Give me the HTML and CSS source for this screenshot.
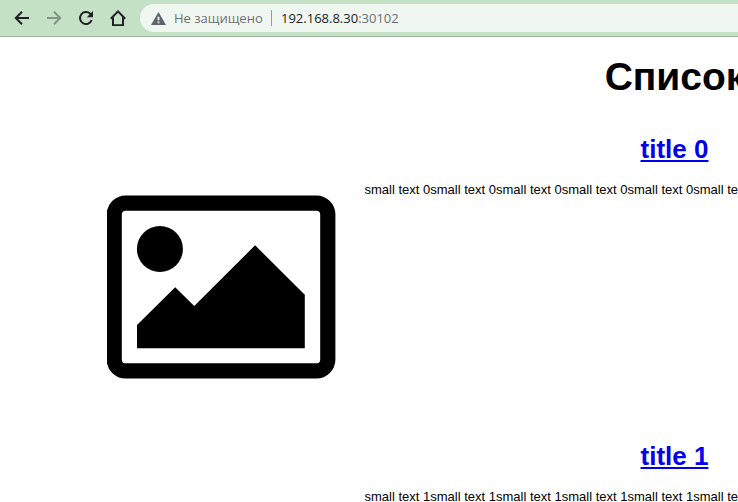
FILE: index.html
```html
<!DOCTYPE html>
<html lang="ru">
<head>
<meta charset="utf-8">
<title>Список</title>
<link rel="stylesheet" href="styles.css">
</head>
<body>
<header class="toolbar">
  <nav class="nav">
    <svg class="nav-icon" viewBox="0 0 16 16"><path d="M15 8H2M8 1.8 1.8 8 8 14.2"/></svg>
    <svg class="nav-icon disabled" viewBox="0 0 16 16"><path d="M1 8h13M8 1.8 14.2 8 8 14.2"/></svg>
    <svg class="nav-icon" viewBox="0 0 16 16"><path d="M13.7 10A6 6 0 1 1 12.2 3.7L14 5.5"/><path class="solid" d="M15 1v6.2H8.8z"/></svg>
    <svg class="nav-icon" viewBox="0 0 16 16"><path d="M.8 8.7 8 1.4l7.2 7.3M3 7.2v8h10v-8"/></svg>
  </nav>
  <div class="address">
    <svg class="warning" viewBox="0 0 15 13"><path fill-rule="evenodd" d="M7.5 0 15 13H0zM6.6 4.7v3.6h1.8V4.7zM6.6 9.5v1.7h1.8V9.5z"/></svg>
    <span class="status">Не защищено</span>
    <span class="divider"></span>
    <span class="url"><span class="host">192.168.8.30</span><span class="port">:30102</span></span>
  </div>
</header>
<main class="page">
  <h1 class="heading">Список</h1>
  <article class="item">
    <svg class="picture" viewBox="0 0 229 184">
      <rect class="frame" x="7.2" y="8.1" width="213.6" height="167.8" rx="11.5"/>
      <circle cx="52.9" cy="53.9" r="23"/>
      <path d="M30 130 68.2 92.3l19 18.8L148.1 50.3 197.8 99.8V153.2H30z"/>
    </svg>
    <div class="content">
      <h2 class="title"><a href="#">title 0</a></h2>
      <p class="text">small text 0small text 0small text 0small text 0small text 0small text 0small text 0small text 0small text 0</p>
    </div>
  </article>
  <article class="item">
    <div class="picture"></div>
    <div class="content">
      <h2 class="title"><a href="#">title 1</a></h2>
      <p class="text">small text 1small text 1small text 1small text 1small text 1small text 1small text 1small text 1small text 1</p>
    </div>
  </article>
</main>
</body>
</html>
```
FILE: styles.css
```css
* { box-sizing: border-box; }
body {
  margin: 0;
  height: 502px;
  overflow: hidden;
  background: #fff;
  color: #000;
  font-family: "Liberation Sans", Arial, sans-serif;
}
.toolbar {
  display: flex;
  align-items: flex-start;
  height: 37px;
  padding-top: 4px;
  background: #c5e1c5;
  border-bottom: 1px solid #9fb69f;
}
.nav {
  display: flex;
  flex: none;
  gap: 16px;
  width: 140px;
  padding: 6px 0 0 14px;
}
.nav-icon {
  width: 16px;
  height: 16px;
  fill: none;
  stroke: #202124;
  stroke-width: 2;
}
.nav-icon .solid { fill: #202124; stroke: none; }
.disabled { stroke: #839583; }
.address {
  display: flex;
  flex: 1;
  align-items: center;
  height: 28px;
  padding-left: 11px;
  border-radius: 14px 0 0 14px;
  background: #f0f7f0;
  font: 13px/28px "Open Sans", sans-serif;
  white-space: nowrap;
}
.warning { width: 15px; height: 13px; fill: #5f6368; }
.status { width: 105px; padding-left: 8px; color: #6b7073; }
.divider { width: 1px; height: 16px; background: #969c97; }
.url { padding-left: 9px; }
.host { color: #202124; }
.port { color: #6b7073; }
.page { width: 985px; }
.heading {
  width: 1350px;
  margin: 0;
  padding-top: 17px;
  font-size: 39px;
  line-height: 46px;
  text-align: center;
}
.item {
  display: flex;
  height: 307px;
  padding: 34px 0 0 107px;
}
.picture {
  flex: none;
  width: 229px;
  height: 184px;
  margin: 61px 28.5px 0 0;
}
.frame { fill: none; stroke: #000; stroke-width: 15.2; }
.content { flex: none; width: 620px; }
.title {
  margin: 0;
  font-size: 26px;
  line-height: 30px;
  text-align: center;
}
.title a { color: #00e; }
.text {
  margin: 18px 0 0;
  font-size: 13px;
  line-height: 15px;
  white-space: nowrap;
}
```
